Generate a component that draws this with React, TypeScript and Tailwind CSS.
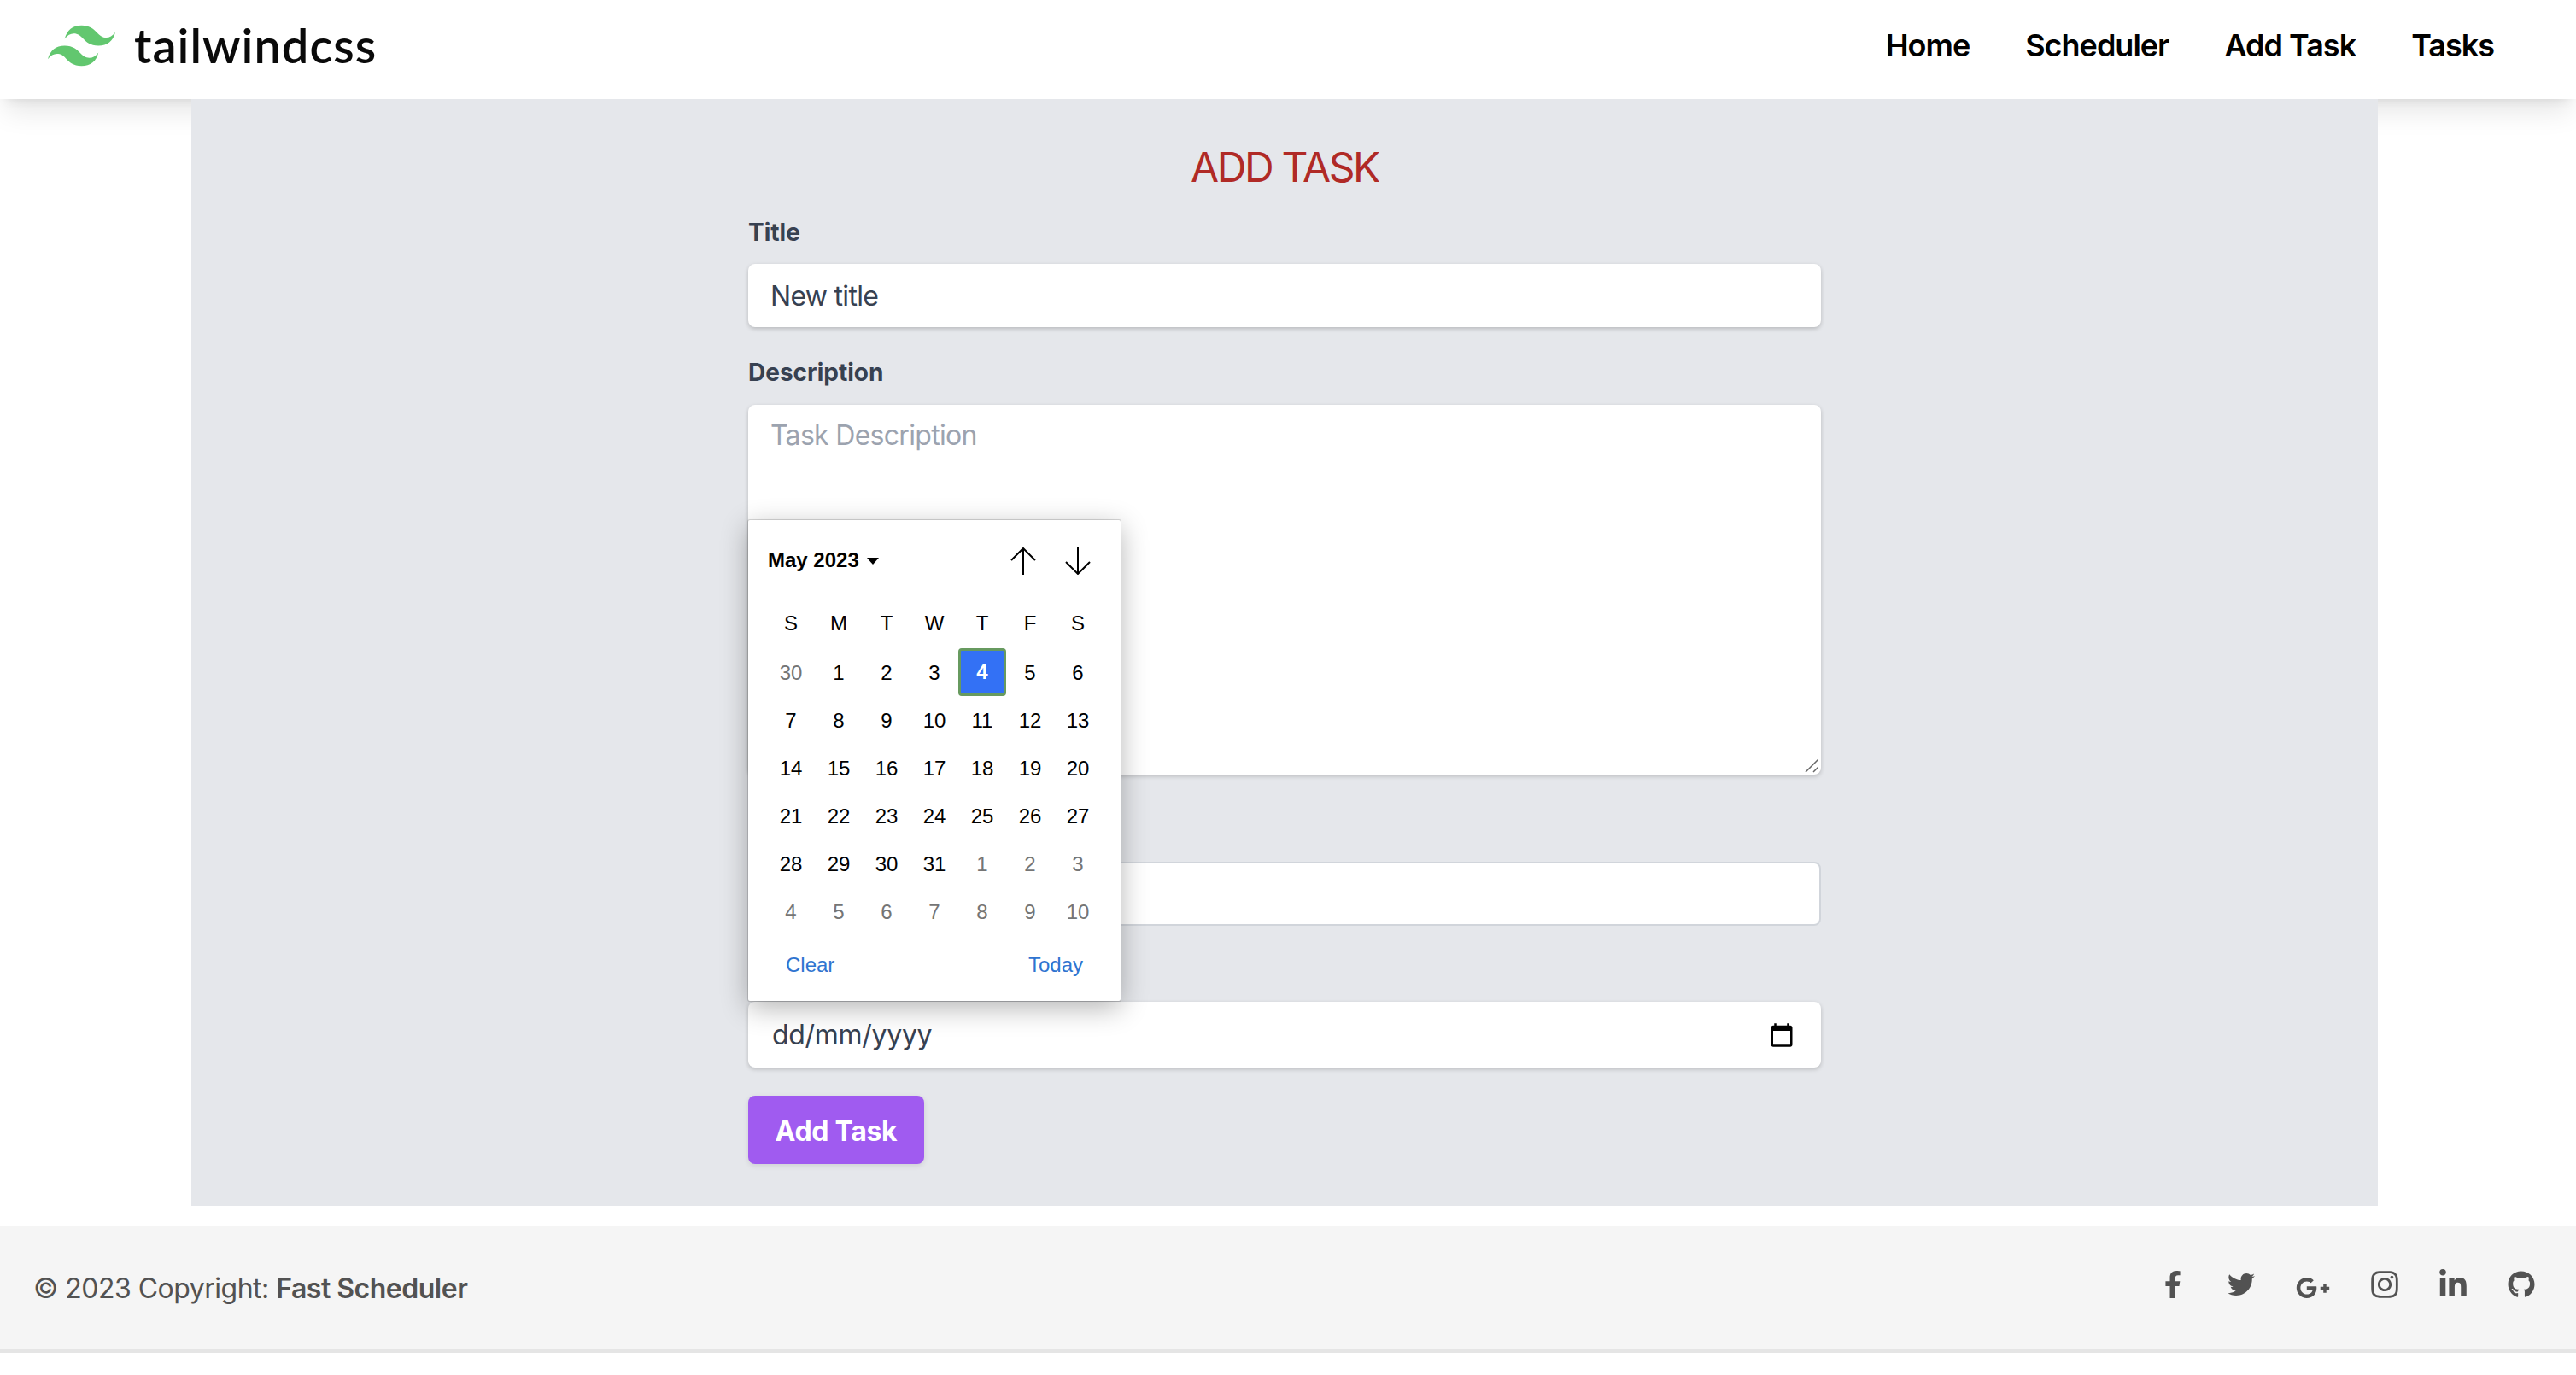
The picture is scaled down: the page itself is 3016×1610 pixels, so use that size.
import { FaFacebookF, FaGithub, FaGooglePlusG, FaInstagram, FaLinkedinIn, FaTwitter } from "react-icons/fa";

const links = ["Home", "Scheduler", "Add Task", "Tasks"];
const weekDays = ["S", "M", "T", "W", "T", "F", "S"];
// muted days belong to the neighbouring months
const days = [
  { n: 30, muted: true },
  ...Array.from({ length: 31 }, (_, i) => ({ n: i + 1, muted: false })),
  ...Array.from({ length: 10 }, (_, i) => ({ n: i + 1, muted: true })),
];

function Logo() {
  return (
    <div className="flex items-center">
      <svg viewBox="0 0 24 24" className="w-[79px] h-[79px] fill-[#62c76f]">
        <path d="M12.001,4.8c-3.2,0-5.2,1.6-6,4.8c1.2-1.6,2.6-2.2,4.2-1.8c0.913,0.228,1.565,0.89,2.288,1.624 C13.666,10.618,15.027,12,18.001,12c3.2,0,5.2-1.6,6-4.8c-1.2,1.6-2.6,2.2-4.2,1.8c-0.913-0.228-1.565-0.89-2.288-1.624 C16.337,6.182,14.976,4.8,12.001,4.8z M6.001,12c-3.2,0-5.2,1.6-6,4.8c1.2-1.6,2.6-2.2,4.2-1.8c0.913,0.228,1.565,0.89,2.288,1.624 c1.177,1.194,2.538,2.576,5.512,2.576c3.2,0,5.2-1.6,6-4.8c-1.2,1.6-2.6,2.2-4.2,1.8c-0.913-0.228-1.565-0.89-2.288-1.624 C10.337,13.382,8.976,12,6.001,12z" />
      </svg>
      <span className="ml-[22px] font-['Lato',sans-serif] font-semibold text-[56px] tracking-[1px] leading-none text-[#0a0a0a]">
        tailwindcss
      </span>
    </div>
  );
}

function Arrow({ down }: { down?: boolean }) {
  return (
    <svg viewBox="0 0 30 32" className={`w-[30px] h-[32px] ${down ? "rotate-180" : ""}`} fill="none" stroke="#000" strokeWidth="2">
      <path d="M15 32V1M1 15L15 1l14 14" />
    </svg>
  );
}

function DatePopup() {
  return (
    <div className="absolute left-0 top-[357px] w-[436px] h-[563px] pt-[1px] bg-white rounded-[2px] shadow-[0_0_0_1px_rgba(0,0,0,0.15),0_8px_32px_rgba(0,0,0,0.3)] font-['Liberation_Sans',sans-serif] text-[24px] tracking-normal text-black">
      <div className="h-[92px] flex items-center pl-[23px] pr-[35px]">
        <span className="font-bold">May 2023</span>
        <span className="ml-[9px] mt-[1px] w-0 h-0 border-x-[7px] border-x-transparent border-t-[8px] border-t-black" />
        <div className="ml-auto flex items-center gap-[34px] mt-[2px]">
          <Arrow />
          <Arrow down />
        </div>
      </div>
      <div className="grid grid-cols-7 px-[22px] mb-[1px]">
        {weekDays.map((d, i) => (
          <div key={i} className="h-14 flex items-center justify-center">{d}</div>
        ))}
      </div>
      <div className="grid grid-cols-7 px-[22px]">
        {days.map((d, i) =>
          d.n === 4 && !d.muted ? (
            <div key={i} className="h-14 flex items-center justify-center bg-[#3371f5] border-[3px] border-[#679a5f] rounded-[4px] text-white font-bold">
              {d.n}
            </div>
          ) : (
            <div key={i} className={`h-14 pt-[2px] flex items-center justify-center ${d.muted ? "text-[#757575]" : ""}`}>
              {d.n}
            </div>
          )
        )}
      </div>
      <div className="flex justify-between items-center px-[44px] h-[70px] text-[#2f74d0]">
        <span>Clear</span>
        <span>Today</span>
      </div>
    </div>
  );
}

export default function App() {
  return (
    <div className="min-h-[1610px] bg-white font-['Inter',sans-serif]">
      <nav className="h-[116px] pb-[10px] flex items-center justify-between pl-[56px] pr-[96px] bg-white shadow-[0_20px_30px_-6px_rgba(0,0,0,0.1),0_8px_12px_-8px_rgba(0,0,0,0.1)]">
        <Logo />
        <ul className="flex gap-[65px] text-[36px] tracking-[-1px] font-semibold text-black">
          {links.map((l) => (
            <li key={l}>{l}</li>
          ))}
        </ul>
      </nav>

      <main className="ml-[224px] w-[2560px] h-[1296px] pt-[48px] bg-[#e5e7eb]">
        <h1 className="text-center text-[48px] leading-[64px] tracking-[-2.4px] text-[#b02a26]">ADD TASK</h1>
        <form className="relative mx-auto w-[1256px] mt-[24px] text-[32px] tracking-[-0.7px] text-[#374151]">
          <label className="block text-[28px] leading-[40px] tracking-normal font-bold">Title</label>
          <input
            readOnly
            value="New title"
            className="block w-full h-[74px] mt-[17px] px-[26px] bg-white rounded-[8px] shadow-[0_2px_5px_rgba(0,0,0,0.2)] outline-none"
          />
          <label className="block mt-[33px] text-[28px] leading-[40px] tracking-normal font-bold">Description</label>
          <div className="relative mt-[18px]">
            <textarea
              readOnly
              placeholder="Task Description"
              className="block w-full h-[433px] px-[26px] py-[12px] bg-white rounded-[8px] shadow-[0_2px_5px_rgba(0,0,0,0.2)] outline-none resize-none placeholder:text-[#9ca3af]"
            />
            <svg viewBox="0 0 16 16" className="absolute right-[3px] bottom-[2px] w-[16px] h-[16px]" stroke="#666" strokeWidth="1.5">
              <path d="M1 15L16 0M10 15l6-6" />
            </svg>
          </div>
          <input readOnly className="block w-full h-[75px] mt-[102px] bg-white rounded-[8px] border-2 border-[#d1d5db] outline-none" />
          <div className="flex items-center justify-between w-full h-[77px] mt-[89px] pl-[28px] pr-[31px] bg-white rounded-[8px] tracking-[-0.3px] shadow-[0_2px_5px_rgba(0,0,0,0.2)]">
            <span>dd/mm/yyyy</span>
            <svg viewBox="0 0 24 24" className="w-[30px] h-[30px] fill-black">
              <path d="M20 3h-1V1h-2v2H7V1H5v2H4c-1.1 0-2 .9-2 2v16c0 1.1.9 2 2 2h16c1.1 0 2-.9 2-2V5c0-1.1-.9-2-2-2zm0 18H4V8h16v13z" />
            </svg>
          </div>
          <button type="button" className="block w-[206px] h-[80px] mt-[33px] pt-[3px] bg-[#a05bf0] rounded-[8px] shadow-[0_2px_6px_rgba(0,0,0,0.1)] tracking-[-0.3px] text-white font-bold">
            Add Task
          </button>
          <DatePopup />
        </form>
      </main>

      <footer className="mt-[24px] h-[148px] flex items-center justify-between pl-[39px] pr-[48px] bg-[#f5f5f5] border-b-4 border-[#e5e5e5] text-[32px] tracking-[-0.5px] text-[#525252]">
        <div className="pt-[2px]">
          © 2023 Copyright: <span className="font-semibold">Fast Scheduler</span>
        </div>
        <div className="flex items-center gap-[48px] mb-[8px]">
          <FaFacebookF className="w-[20px] h-[32px] mr-[6px]" />
          <FaTwitter className="w-[32px] h-[32px]" />
          <FaGooglePlusG className="w-[40px] h-[32px] translate-y-[4px]" />
          <FaInstagram className="w-[36px] h-[36px] -mx-[2px]" />
          <FaLinkedinIn className="w-[36px] h-[36px] -mx-[2px]" />
          <FaGithub className="w-[32px] h-[32px]" />
        </div>
      </footer>
    </div>
  );
}
